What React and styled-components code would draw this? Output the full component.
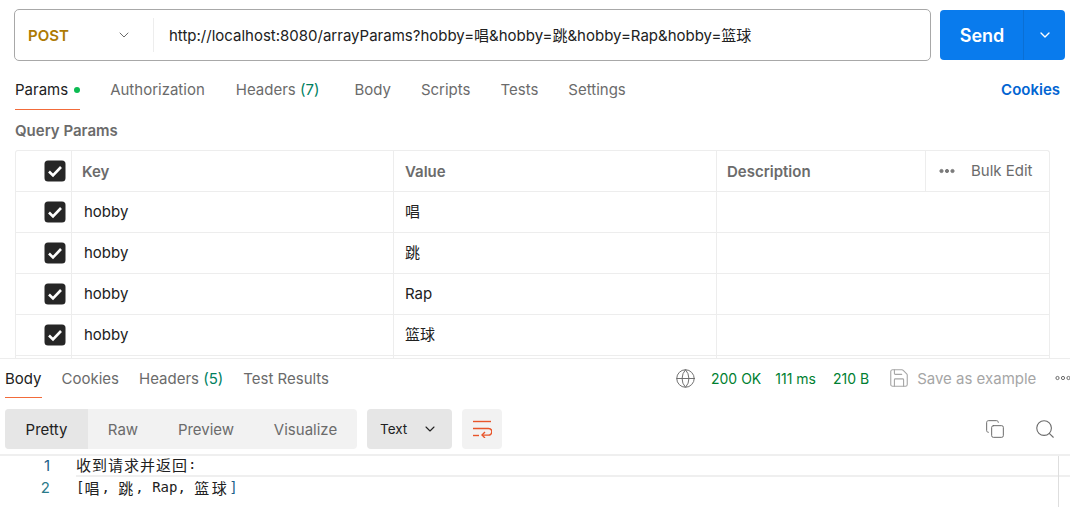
import React from "react";
import styled, { createGlobalStyle } from "styled-components";
import { ChevronDown, Globe, Save, Copy, Search } from "lucide-react";

const Global = createGlobalStyle`
  html, body { margin: 0; padding: 0; background: #fff; }
  body { font-family: Inter, "Noto Sans CJK SC", sans-serif; font-size: 15px; color: #212121; }
  * { box-sizing: border-box; }
`;

const Page = styled.div`
  width: 1070px;
  height: 507px;
  overflow: hidden;
  display: flex;
  flex-direction: column;
`;
const RequestBar = styled.div`
  display: flex;
  align-items: center;
  gap: 9px;
  height: 52px;
  margin: 9px 5px 0 14px;
`;
const UrlBox = styled.div`
  flex: 1;
  height: 52px;
  display: flex;
  align-items: center;
  border: 1px solid #a8a8a8;
  border-radius: 5px;
`;
const Method = styled.div`
  width: 139px;
  height: 34px;
  display: flex;
  align-items: center;
  justify-content: space-between;
  padding: 0 21px 0 13px;
  border-right: 1px solid #ededed;
  color: #ad7a03;
  font-weight: 600;
  font-size: 15px;
  svg { color: #6b6b6b; }
`;
const Url = styled.div`
  padding: 0 0 1px 15px;
  font-size: 15px;
  color: #212121;
  white-space: nowrap;
`;
const SendGroup = styled.div`
  width: 125px;
  height: 50px;
  display: flex;
  background: #097bed;
  border-radius: 4px;
  color: #fff;
`;
const SendLabel = styled.div`
  width: 84px;
  padding-left: 1px;
  display: flex;
  align-items: center;
  justify-content: center;
  font-weight: 600;
  font-size: 18px;
  border-right: 1px solid #0a6fd4;
`;
const SendArrow = styled.div`
  flex: 1;
  display: flex;
  align-items: center;
  justify-content: center;
`;
const RequestTabs = styled.div`
  display: flex;
  align-items: stretch;
  gap: 30px;
  height: 40px;
  margin: 9px 10px 0 15px;
`;
const Tab = styled.div`
  position: relative;
  display: flex;
  align-items: center;
  gap: 6px;
  font-size: 15px;
  padding-bottom: 2px;
  color: ${(p) => (p.$active ? "#212121" : "#6b6b6b")};
  margin-right: ${(p) => p.$extra || 0}px;
  white-space: nowrap;
  ${(p) =>
    p.$active &&
    `&::after { content: ""; position: absolute; left: 0; right: 0; bottom: ${p.$lineBottom ?? 0}px; height: 1px; background: #f26b3a; }`}
`;
const Dot = styled.span`
  width: 6px;
  height: 6px;
  border-radius: 50%;
  background: #0cbb52;
  margin-top: 1px;
`;
const Count = styled.span`
  color: #007f5f;
`;
const CookieLink = styled.div`
  margin-left: auto;
  padding-bottom: 2px;
  display: flex;
  align-items: center;
  color: #0265d2;
  font-weight: 600;
  font-size: 15px;
`;
const SectionTitle = styled.div`
  height: 40px;
  margin-left: 15px;
  padding-top: 1px;
  display: flex;
  align-items: center;
  font-weight: 600;
  font-size: 15px;
  color: #6b6b6b;
`;
const Table = styled.div`
  width: 1035px;
  height: 208px;
  margin-left: 15px;
  overflow: hidden;
  border: 1px solid #ededed;
  border-bottom: none;
  border-radius: 3px 3px 0 0;
  display: grid;
  grid-template-columns: 56px 322px 323px 209px 123px;
  grid-auto-rows: 41px;
  flex: none;
`;
const Cell = styled.div`
  display: flex;
  align-items: center;
  border-bottom: 1px solid #ededed;
  border-right: ${(p) => (p.$last ? "none" : "1px solid #ededed")};
  padding: 0 0 ${(p) => p.$lift ?? 1}px ${(p) => p.$pad ?? 11}px;
  font-size: 15px;
  ${(p) => p.$span && `grid-column: span ${p.$span};`}
`;
const HeadCell = styled(Cell)`
  font-weight: 600;
  color: #6b6b6b;
`;
const CheckCell = styled(Cell)`
  justify-content: flex-end;
  padding: 0 5px 0 0;
`;
const BulkCell = styled(Cell)`
  gap: 16px;
  padding-left: 13px;
  color: #6b6b6b;
`;
const Response = styled.div`
  flex: 1;
  border-top: 1px solid #ededed;
  display: flex;
  flex-direction: column;
  position: relative;
`;
const ResponseHead = styled.div`
  display: flex;
  align-items: stretch;
  height: 40px;
  padding-left: 5px;
`;
const ResponseTabs = styled.div`
  display: flex;
  gap: 20px;
`;
const Status = styled.div`
  margin-left: auto;
  display: flex;
  align-items: center;
  font-size: 14px;
  width: 404px;
  flex: none;
  margin-right: -9px;
  padding-bottom: 2px;
  svg { flex: none; }
`;
const Metric = styled.span`
  color: #007f31;
  margin-left: ${(p) => p.$gap}px;
  white-space: nowrap;
`;
const SaveText = styled.span`
  color: #a6a6a6;
  font-size: 15px;
  margin-left: 7px;
  white-space: nowrap;
`;
const IconSlot = styled.span`
  display: flex;
  margin-left: ${(p) => p.$gap || 0}px;
  color: ${(p) => p.$color || "#6b6b6b"};
`;
const Toolbar = styled.div`
  display: flex;
  align-items: center;
  height: 40px;
  margin-top: 10px;
  padding-left: 5px;
`;
const Segments = styled.div`
  display: flex;
  width: 352px;
  height: 40px;
  background: #f2f2f2;
  border-radius: 4px;
  overflow: hidden;
`;
const Segment = styled.div`
  display: flex;
  align-items: center;
  justify-content: center;
  width: ${(p) => p.$w}px;
  background: ${(p) => (p.$active ? "#e6e6e6" : "transparent")};
  color: ${(p) => (p.$active ? "#212121" : "#6b6b6b")};
`;
const TypeSelect = styled.div`
  display: flex;
  align-items: center;
  justify-content: space-between;
  width: 85px;
  height: 40px;
  margin-left: 10px;
  padding: 0 14px 0 13px;
  font-size: 13.5px;
  background: #e6e6e6;
  border-radius: 4px;
`;
const WrapButton = styled.div`
  display: flex;
  align-items: center;
  justify-content: center;
  width: 40px;
  height: 40px;
  margin-left: 10px;
  background: #f2f2f2;
  border-radius: 4px;
`;
const ToolIcons = styled.div`
  margin-left: auto;
  display: flex;
  align-items: center;
  gap: 29px;
  padding-right: 14px;
  color: #6b6b6b;
`;
const Code = styled.div`
  margin-top: 5px;
  flex: 1;
  border-top: 2px solid #efefef;
  position: relative;
  font-family: "DejaVu Sans Mono", "Noto Sans CJK SC", monospace;
  font-size: 14px;
`;
const CodeLine = styled.div`
  display: flex;
  height: ${(p) => (p.$current ? 21 : 22)}px;
  align-items: center;
`;
const LineNo = styled.span`
  width: 50px;
  padding-bottom: ${(p) => p.$lift}px;
  text-align: right;
  color: ${(p) => p.$color};
  font-family: Inter, sans-serif;
  font-size: 15px;
  flex: none;
`;
const LineText = styled.span`
  flex: 1;
  height: 100%;
  margin-left: 26px;
  padding-bottom: ${(p) => p.$lift}px;
  display: flex;
  align-items: center;
  white-space: pre;
  color: #212121;
  ${(p) => p.$current && "border-bottom: 2px solid #efefef;"}
`;
const Cjk = styled.span`
  font-family: "Noto Sans CJK SC", sans-serif;
  font-size: 15px;
  letter-spacing: ${(p) => p.$space}px;
`;
const Bracket = styled.span`
  color: #1d5f8a;
`;
const Ruler = styled.div`
  position: absolute;
  left: 1058px;
  top: 0;
  bottom: 0;
  width: 1px;
  background: #dedede;
`;

const Check = () => (
  <svg width="22" height="22" viewBox="0 0 22 22">
    <rect x="0.5" y="0.5" width="21" height="21" rx="3.5" fill="#262626" />
    <path d="M5 11.5l4 4 8-8.5" fill="none" stroke="#fff" strokeWidth="2.6" />
  </svg>
);
const Dots = ({ filled }) => (
  <svg width="16" height="6" viewBox="0 0 16 6" fill={filled ? "#7a7a7a" : "none"} stroke={filled ? "#7a7a7a" : "#6b6b6b"} strokeWidth="1">
    <circle cx="2.5" cy="3" r="1.6" />
    <circle cx="8" cy="3" r="1.6" />
    <circle cx="13.5" cy="3" r="1.6" />
  </svg>
);
const Wrap = () => (
  <svg width="20" height="18" viewBox="0 0 20 18" fill="none" stroke="#e8552a" strokeWidth="1.4">
    <path d="M1 1.5h18" />
    <path d="M1 8.5h15.5a3.2 3.2 0 0 1 0 6.6H10" />
    <path d="M13 12l-3 3 3 3" />
    <path d="M1 15.5h6" />
  </svg>
);

const rows = [
  { value: "唱", lift: 3 },
  { value: "跳", lift: 3 },
  { value: "Rap", lift: 1 },
  { value: "篮球", lift: 3 },
];

export default function App() {
  return (
    <Page>
      <Global />
      <RequestBar>
        <UrlBox>
          <Method>
            POST
            <ChevronDown size={16} strokeWidth={1.5} />
          </Method>
          <Url>http://localhost:8080/arrayParams?hobby=唱&amp;hobby=跳&amp;hobby=Rap&amp;hobby=篮球</Url>
        </UrlBox>
        <SendGroup>
          <SendLabel>Send</SendLabel>
          <SendArrow>
            <ChevronDown size={16} strokeWidth={2} />
          </SendArrow>
        </SendGroup>
      </RequestBar>
      <RequestTabs>
        <Tab $active $lineBottom={0}>
          Params <Dot />
        </Tab>
        <Tab $extra={1}>Authorization</Tab>
        <Tab $extra={5}>
          <span>
            Headers <Count>(7)</Count>
          </span>
        </Tab>
        <Tab>Body</Tab>
        <Tab>Scripts</Tab>
        <Tab>Tests</Tab>
        <Tab>Settings</Tab>
        <CookieLink>Cookies</CookieLink>
      </RequestTabs>
      <SectionTitle>Query Params</SectionTitle>
      <Table>
        <CheckCell>
          <Check />
        </CheckCell>
        <HeadCell $pad={10} $lift={0}>Key</HeadCell>
        <HeadCell $lift={0}>Value</HeadCell>
        <HeadCell $pad={10} $lift={0}>Description</HeadCell>
        <BulkCell $last>
          <Dots filled />
          Bulk Edit
        </BulkCell>
        {rows.map((r, i) => (
          <React.Fragment key={i}>
            <CheckCell>
              <Check />
            </CheckCell>
            <Cell $pad={12}>hobby</Cell>
            <Cell $lift={r.lift}>{r.value}</Cell>
            <Cell $span={2} $last />
          </React.Fragment>
        ))}
        <Cell />
        <Cell />
        <Cell />
        <Cell $span={2} $last />
      </Table>
      <Response>
        <ResponseHead>
          <ResponseTabs>
            <Tab $active $lineBottom={1}>
              Body
            </Tab>
            <Tab>Cookies</Tab>
            <Tab>
              <span>
                Headers <Count>(5)</Count>
              </span>
            </Tab>
            <Tab>Test Results</Tab>
          </ResponseTabs>
          <Status>
            <IconSlot>
              <Globe size={21} strokeWidth={1.1} />
            </IconSlot>
            <Metric $gap={15}>200 OK</Metric>
            <Metric $gap={14}>111 ms</Metric>
            <Metric $gap={17}>210 B</Metric>
            <IconSlot $gap={19} $color="#a6a6a6">
              <Save size={22} strokeWidth={1.2} />
            </IconSlot>
            <SaveText>Save as example</SaveText>
            <IconSlot $gap={19}>
              <Dots />
            </IconSlot>
          </Status>
        </ResponseHead>
        <Toolbar>
          <Segments>
            <Segment $active $w={83}>
              Pretty
            </Segment>
            <Segment $w={70}>Raw</Segment>
            <Segment $w={96}>Preview</Segment>
            <Segment $w={103}>Visualize</Segment>
          </Segments>
          <TypeSelect>
            Text
            <ChevronDown size={16} strokeWidth={1.6} color="#212121" />
          </TypeSelect>
          <WrapButton>
            <Wrap />
          </WrapButton>
          <ToolIcons>
            <Copy size={20} strokeWidth={1.2} />
            <Search size={22} strokeWidth={1.2} />
          </ToolIcons>
        </Toolbar>
        <Code>
          <CodeLine $current>
            <LineNo $color="#1d5f8a" $lift={3}>1</LineNo>
            <LineText $current $lift={3}>
              <Cjk $space={1}>收到请求并返回</Cjk>:
            </LineText>
          </CodeLine>
          <CodeLine>
            <LineNo $color="#2a7a8a" $lift={2}>2</LineNo>
            <LineText $lift={2}>
              [<Cjk $space={2}>唱</Cjk>, <Cjk $space={2}>跳</Cjk>, Rap, <Cjk $space={2.5}>篮球</Cjk>
              <Bracket>]</Bracket>
            </LineText>
          </CodeLine>
          <Ruler />
        </Code>
      </Response>
    </Page>
  );
}
